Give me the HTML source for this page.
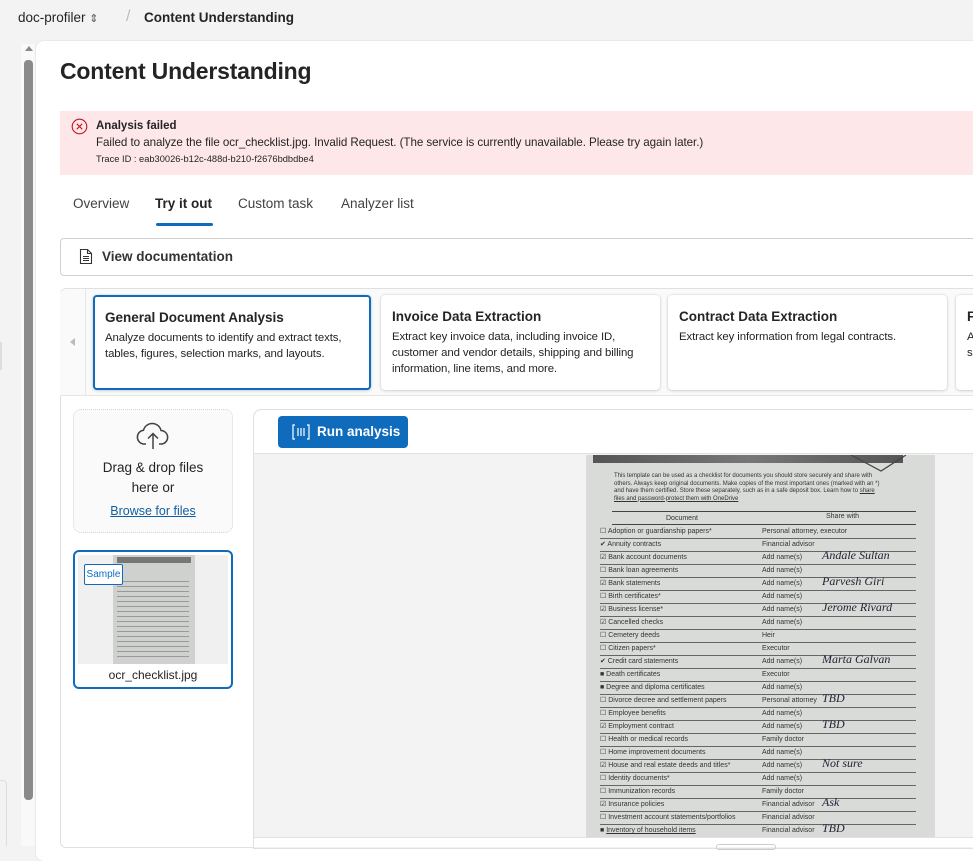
<!DOCTYPE html>
<html><head><meta charset="utf-8"><style>
*{box-sizing:border-box;margin:0;padding:0}
body{width:973px;height:846px;overflow:hidden;background:#f3f3f3;font-family:"Segoe UI","Liberation Sans",sans-serif;color:#242424;position:relative}
.a{position:absolute}
.card{position:absolute;top:295px;height:95px;background:#fff;border-radius:4px;box-shadow:0 0 2px rgba(0,0,0,.15),0 1px 3px rgba(0,0,0,.12);padding:14px 11px;overflow:hidden}
.card h3{font-size:13.5px;font-weight:600;margin-bottom:5px;white-space:nowrap;color:#242424}
.card p{font-size:11.4px;line-height:16px;color:#242424;letter-spacing:-0.1px}
.doc{position:absolute;left:586px;top:455px;width:349px;height:382px;background:#d9dbd8;overflow:hidden;font-family:"Liberation Sans",sans-serif;color:#333}
.row{position:absolute;left:14px;width:316px;height:13px;border-bottom:1px solid #666;font-size:7px;line-height:12px}
.row span{position:absolute;left:162px}
.row i{position:absolute;left:222px;font-family:"Liberation Serif",serif;font-size:12px;color:#223;top:-3px}
</style></head><body>
<div class="a" style="left:18px;top:10px;font-size:13.5px;color:#242424">doc-profiler <span style="font-size:11px;color:#555">⇕</span></div>
<div class="a" style="left:126px;top:8px;font-size:16px;color:#bbb">/</div>
<div class="a" style="left:144px;top:10px;font-size:13.5px;font-weight:600">Content Understanding</div>

<div class="a" style="left:21px;top:44px;width:14px;height:802px;background:#f9f9f9"></div>
<div class="a" style="left:25px;top:46px;width:0;height:0;border-left:4px solid transparent;border-right:4px solid transparent;border-bottom:5px solid #888"></div>
<div class="a" style="left:24px;top:60px;width:9px;height:740px;background:#8a8a8a;border-radius:4px"></div>
<div class="a" style="left:0;top:342px;width:2px;height:28px;background:#ddd"></div>
<div class="a" style="left:0;top:780px;width:7px;height:66px;border:1px solid #ddd;border-left:none;border-bottom:none;border-radius:0 4px 0 0"></div>

<div class="a" style="left:36px;top:41px;width:950px;height:820px;background:#fff;border-radius:8px;box-shadow:0 0 2px rgba(0,0,0,.12)"></div>
<div class="a" style="left:60px;top:58px;font-size:23px;font-weight:600;letter-spacing:-0.2px">Content Understanding</div>

<div class="a" style="left:60px;top:111px;width:913px;height:64px;background:#fde7e9"></div>
<svg class="a" style="left:71px;top:118px" width="17" height="17" viewBox="0 0 17 17"><circle cx="8.5" cy="8.5" r="7.3" fill="none" stroke="#c50f1f" stroke-width="1.1"/><path d="M5.8 5.8L11.2 11.2M11.2 5.8L5.8 11.2" stroke="#c50f1f" stroke-width="1.1"/></svg>
<div class="a" style="left:96px;top:120px;font-size:11.5px;font-weight:600">Analysis failed</div>
<div class="a" style="left:96px;top:136px;font-size:11.6px;white-space:nowrap;letter-spacing:-0.05px">Failed to analyze the file ocr_checklist.jpg. Invalid Request. (The service is currently unavailable. Please try again later.)</div>
<div class="a" style="left:96px;top:154px;font-size:9.3px">Trace ID : eab30026-b12c-488d-b210-f2676bdbdbe4</div>

<div class="a" style="left:73px;top:196px;font-size:13.5px;color:#424242">Overview</div>
<div class="a" style="left:155px;top:196px;font-size:13.5px;font-weight:600">Try it out</div>
<div class="a" style="left:156px;top:223px;width:57px;height:3px;background:#0f6cbd;border-radius:2px"></div>
<div class="a" style="left:238px;top:196px;font-size:13.5px;color:#424242">Custom task</div>
<div class="a" style="left:341px;top:196px;font-size:13.5px;color:#424242">Analyzer list</div>

<div class="a" style="left:60px;top:238px;width:930px;height:38px;border:1px solid #d1d1d1;border-radius:4px"></div>
<svg class="a" style="left:79px;top:248px" width="14" height="17" viewBox="0 0 14 17"><path d="M1.5 1.5H8.5L12.5 5.5V15.5H1.5Z M8.5 1.5V5.5H12.5" fill="none" stroke="#333" stroke-width="1.1"/><path d="M4 8.5H10M4 10.5H10M4 12.5H10" stroke="#333" stroke-width="1"/></svg>
<div class="a" style="left:102px;top:249px;font-size:13.5px;font-weight:600;color:#333">View documentation</div>

<div class="a" style="left:60px;top:288px;width:930px;height:560px;border:1px solid #e0e0e0;border-radius:6px;background:#fff"></div>
<div class="a" style="left:60px;top:289px;width:930px;height:107px;background:#fafafa;border-bottom:1px solid #e6e6e6;border-radius:6px 0 0 0"></div>
<div class="a" style="left:85px;top:289px;width:1px;height:107px;background:#e6e6e6"></div>
<div class="a" style="left:70px;top:338px;border-top:4px solid transparent;border-bottom:4px solid transparent;border-right:5px solid #bbb"></div>
<div class="card" style="left:93px;width:278px;border:2px solid #0f6cbd;padding:13px 10px"><h3>General Document Analysis</h3><p>Analyze documents to identify and extract texts, tables, figures, selection marks, and layouts.</p></div>
<div class="card" style="left:381px;width:279px"><h3>Invoice Data Extraction</h3><p>Extract key invoice data, including invoice ID, customer and vendor details, shipping and billing information, line items, and more.</p></div>
<div class="card" style="left:668px;width:279px"><h3>Contract Data Extraction</h3><p>Extract key information from legal contracts.</p></div>
<div class="card" style="left:956px;width:60px"><h3>F</h3><p>A<br>s</p></div>

<div class="a" style="left:73px;top:409px;width:160px;height:124px;background:#fafafa;border:1px dotted #d6d6d6;border-radius:8px;text-align:center">
<svg style="margin-top:12px" width="38" height="30" viewBox="0 0 38 30"><path d="M12 22H9A7 7 0 0 1 9.5 8.2A9 9 0 0 1 27 8.5A6.8 6.8 0 0 1 28 22H25" fill="none" stroke="#424242" stroke-width="1.5"/><path d="M19 27V12M14 16.5L19 11.5L24 16.5" fill="none" stroke="#424242" stroke-width="1.5"/></svg>
<div style="font-size:13.5px;line-height:20px;color:#242424;margin-top:1px">Drag &amp; drop files<br>here or</div>
<div style="font-size:12.5px;color:#115ea3;text-decoration:underline;margin-top:6px">Browse for files</div></div>

<div class="a" style="left:73px;top:550px;width:160px;height:139px;border:2px solid #0f6cbd;border-radius:6px;background:#fff;overflow:hidden">
<div class="a" style="left:3px;top:3px;width:150px;height:109px;background:#f0f0f0"></div>
<div class="a" style="left:38px;top:3px;width:82px;height:109px;background:#cfd1cf"></div>
<div class="a" style="left:42px;top:5px;width:74px;height:6px;background:#777"></div>
<div class="a" style="left:42px;top:25px;width:72px;height:80px;background:repeating-linear-gradient(#cfd1cf 0 4px,#999 4px 5px)"></div>
<div class="a" style="left:9px;top:12px;width:39px;height:21px;background:#fff;border:1px solid #0f6cbd;border-radius:2px;font-size:10px;color:#0f6cbd;text-align:center;line-height:19px">Sample</div>
<div class="a" style="left:0;top:116px;width:156px;text-align:center;font-size:12px">ocr_checklist.jpg</div></div>

<div class="a" style="left:253px;top:409px;width:730px;height:440px;border:1px solid #e0e0e0;border-radius:8px 0 0 0;background:#f3f3f3"></div>
<div class="a" style="left:254px;top:410px;width:720px;height:44px;background:#fff;border-bottom:1px solid #e0e0e0;border-radius:8px 0 0 0"></div>
<div class="a" style="left:278px;top:416px;width:130px;height:32px;background:#0f6cbd;border-radius:4px;color:#fff;font-size:13.5px;font-weight:600;line-height:32px;padding-left:39px">Run analysis</div>
<svg class="a" style="left:292px;top:424px" width="18" height="16" viewBox="0 0 18 16"><path d="M3 1H1V15H3M15 1H17V15H15M6 4V12M9 4V12M12 4V12" fill="none" stroke="#fff" stroke-width="1.2"/></svg>
<div class="a" style="left:254px;top:837px;width:720px;height:10px;background:#fff;border-top:1px solid #e0e0e0"></div>
<div class="a" style="left:716px;top:844px;width:60px;height:6px;border:1px solid #ccc;border-radius:4px"></div>

<div class="doc">
<div class="a" style="left:7px;top:0;width:310px;height:8px;background:linear-gradient(90deg,#555,#777,#555)"></div>
<svg class="a" style="left:265px;top:0" width="60" height="18"><path d="M0 0L30 16L55 0" fill="none" stroke="#444" stroke-width="1.2"/></svg>
<div class="a" style="left:28px;top:18px;width:270px;font-size:6px;line-height:7.5px;color:#333">This template can be used as a checklist for documents you should store securely and share with others. Always keep original documents. Make copies of the most important ones (marked with an *) and have them certified. Store these separately, such as in a safe deposit box. Learn how to <u>share files and password-protect them with OneDrive</u></div>
<div class="a" style="left:26px;top:56px;width:304px;border-top:1.5px solid #444"></div>
<div class="a" style="left:80px;top:60px;font-size:7px">Document</div>
<div class="a" style="left:240px;top:58px;font-size:7px">Share with</div>
<div class="a" style="left:26px;top:69px;width:304px;border-top:1.5px solid #444"></div>
<div class="row" style="top:71px">☐ Adoption or guardianship papers*<span>Personal attorney, executor</span></div>
<div class="row" style="top:84px">✔ Annuity contracts<span>Financial advisor</span></div>
<div class="row" style="top:97px">☑ Bank account documents<span>Add name(s)</span><i>Andale Sultan</i></div>
<div class="row" style="top:110px">☐ Bank loan agreements<span>Add name(s)</span></div>
<div class="row" style="top:123px">☑ Bank statements<span>Add name(s)</span><i>Parvesh Giri</i></div>
<div class="row" style="top:136px">☐ Birth certificates*<span>Add name(s)</span></div>
<div class="row" style="top:149px">☑ Business license*<span>Add name(s)</span><i>Jerome Rivard</i></div>
<div class="row" style="top:162px">☑ Cancelled checks<span>Add name(s)</span></div>
<div class="row" style="top:175px">☐ Cemetery deeds<span>Heir</span></div>
<div class="row" style="top:188px">☐ Citizen papers*<span>Executor</span></div>
<div class="row" style="top:201px">✔ Credit card statements<span>Add name(s)</span><i>Marta Galvan</i></div>
<div class="row" style="top:214px">■ Death certificates<span>Executor</span></div>
<div class="row" style="top:227px">■ Degree and diploma certificates<span>Add name(s)</span></div>
<div class="row" style="top:240px">☐ Divorce decree and settlement papers<span>Personal attorney</span><i>TBD</i></div>
<div class="row" style="top:253px">☐ Employee benefits<span>Add name(s)</span></div>
<div class="row" style="top:266px">☑ Employment contract<span>Add name(s)</span><i>TBD</i></div>
<div class="row" style="top:279px">☐ Health or medical records<span>Family doctor</span></div>
<div class="row" style="top:292px">☐ Home improvement documents<span>Add name(s)</span></div>
<div class="row" style="top:305px">☑ House and real estate deeds and titles*<span>Add name(s)</span><i>Not sure</i></div>
<div class="row" style="top:318px">☐ Identity documents*<span>Add name(s)</span></div>
<div class="row" style="top:331px">☐ Immunization records<span>Family doctor</span></div>
<div class="row" style="top:344px">☑ Insurance policies<span>Financial advisor</span><i>Ask</i></div>
<div class="row" style="top:357px">☐ Investment account statements/portfolios<span>Financial advisor</span></div>
<div class="row" style="top:370px">■ <u>Inventory of household items</u><span>Financial advisor</span><i>TBD</i></div>
<div class="row" style="top:383px">☐ Inventory of documents – use this checklist<span>Add name(s)</span></div>
</div>
</body></html>
